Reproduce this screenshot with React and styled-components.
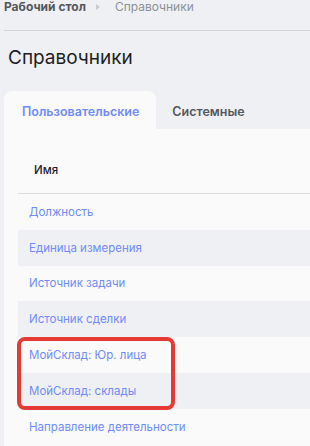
import React from 'react';
import styled, { createGlobalStyle } from 'styled-components';

const GlobalStyle = createGlobalStyle`
  html, body {
    margin: 0;
    padding: 0;
    background: #eff0f4;
    font-family: Inter, "Noto Sans", sans-serif;
    overflow: hidden;
  }
`;

const Page = styled.div`
  width: 310px;
  height: 446px;
  padding-left: 4px;
  box-sizing: border-box;
  overflow: hidden;
`;

const Breadcrumbs = styled.div`
  display: flex;
  align-items: center;
  height: 14px;
  padding-bottom: 16px;
  font-size: 12px;
  line-height: 14px;
  border-bottom: 1px solid #d3d5da;
`;

const Crumb = styled.span`
  color: ${(p) => (p.$current ? '#8d9096' : '#55575c')};
  font-weight: ${(p) => (p.$current ? 400 : 700)};
`;

const Sep = styled.span`
  width: 0;
  height: 0;
  margin: 0 15px 0 10px;
  border-top: 3px solid transparent;
  border-bottom: 3px solid transparent;
  border-left: 4px solid #c9cbd0;
`;

const Title = styled.h1`
  margin: 0;
  padding: 14px 0 0 4px;
  height: 46px;
  font-size: 19px;
  font-weight: 400;
  color: #1c1d21;
  line-height: 26px;
`;

const Tabs = styled.div`
  display: flex;
  align-items: stretch;
  height: 38px;
`;

const Tab = styled.div`
  display: flex;
  align-items: center;
  padding: ${(p) => (p.$active ? '0 17px 0 18px' : '0 16px')};
  font-size: 12.5px;
  font-weight: 600;
  color: ${(p) => (p.$active ? '#6f8cf7' : '#55575c')};
  background: ${(p) => (p.$active ? '#fafafb' : 'transparent')};
  border-radius: 8px 8px 0 0;
  padding-top: 2px;
`;

const Panel = styled.div`
  background: #fafafb;
  padding: 14px 0 0 14px;
  height: 320px;
`;

const Table = styled.div`
  position: relative;
  display: flex;
  flex-direction: column;
`;

const HeaderRow = styled.div`
  box-sizing: border-box;
  display: flex;
  align-items: center;
  height: 51px;
  padding: 4px 0 0 16px;
  font-size: 11.5px;
  font-weight: 500;
  color: #1f2024;
  border-bottom: 1px solid #dcdde1;
`;

const Row = styled.div`
  display: flex;
  align-items: center;
  height: 35.8px;
  padding-left: 11px;
  font-size: 11.5px;
  color: #6f8cf7;
  background: ${(p) => (p.$striped ? '#eff0f4' : '#fafafb')};
`;

const Highlight = styled.div`
  position: absolute;
  left: -1px;
  top: 194px;
  width: 150px;
  height: 65px;
  border: 4px solid #e53a34;
  border-radius: 8px;
`;

const rows = [
  'Должность',
  'Единица измерения',
  'Источник задачи',
  'Источник сделки',
  'МойСклад: Юр. лица',
  'МойСклад: склады',
  'Направление деятельности',
];

export default function App() {
  return (
    <Page>
      <GlobalStyle />
      <Breadcrumbs>
        <Crumb>Рабочий стол</Crumb>
        <Sep />
        <Crumb $current>Справочники</Crumb>
      </Breadcrumbs>
      <Title>Справочники</Title>
      <Tabs>
        <Tab $active>Пользовательские</Tab>
        <Tab>Системные</Tab>
      </Tabs>
      <Panel>
        <Table>
          <HeaderRow>Имя</HeaderRow>
          {rows.map((r, i) => (
            <Row key={r} $striped={i % 2 === 1}>{r}</Row>
          ))}
          <Highlight />
        </Table>
      </Panel>
    </Page>
  );
}
